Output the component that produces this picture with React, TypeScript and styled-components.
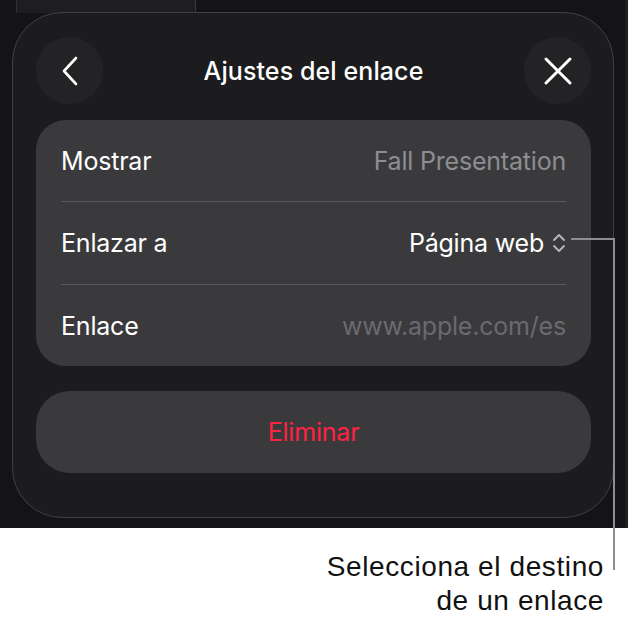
import React from "react";
import styled, { createGlobalStyle } from "styled-components";

const Global = createGlobalStyle`
  html, body { margin: 0; padding: 0; background: #ffffff; }
  body { font-family: Inter, "Noto Sans", sans-serif; -webkit-font-smoothing: antialiased; }
  * { box-sizing: border-box; }
`;

const Page = styled.div`
  position: relative;
  width: 628px;
  height: 620px;
  background: #ffffff;
`;

const Stage = styled.div`
  position: relative;
  height: 528px;
  background: #141416;
  padding: 12px 14px 10px 12px;
  border-right: 3px solid #1f1f21;
`;

const Backdrop = styled.div`
  position: absolute;
  top: 0;
  left: 16px;
  width: 180px;
  height: 13px;
  background: #1e1e20;
  border-left: 1px solid #303033;
  border-right: 1px solid #3a3a3d;
`;

const Sheet = styled.div`
  position: relative;
  width: 602px;
  height: 506px;
  background: #1c1c1e;
  border: 1px solid #404043;
  border-radius: 50px;
  padding: 24px 22px 44px 23px;
  display: flex;
  flex-direction: column;
`;

const Header = styled.div`
  display: grid;
  grid-template-columns: 67px 1fr 67px;
  align-items: center;
  height: 67px;
  margin-bottom: 16px;
`;

const RoundButton = styled.button`
  width: 67px;
  height: 67px;
  border-radius: 50%;
  border: none;
  background: #232325;
  display: flex;
  align-items: center;
  justify-content: center;
  padding: 0;
  color: #ffffff;
`;

const Title = styled.div`
  text-align: center;
  color: #ffffff;
  font-size: 25px;
  font-weight: 500;
  letter-spacing: 0.1px;
`;

const Card = styled.div`
  background: #3a3a3c;
  border-radius: 30px;
  padding: 0 25px;
  display: flex;
  flex-direction: column;
`;

const Row = styled.div<{ $first?: boolean; $h: number }>`
  height: ${(p) => p.$h}px;
  display: flex;
  align-items: center;
  justify-content: space-between;
  border-top: ${(p) => (p.$first ? "none" : "1px solid #58585c")};
`;

const Label = styled.span`
  color: #ffffff;
  font-size: 25px;
  letter-spacing: -0.2px;
`;

const Value = styled.span<{ $tone: "light" | "dim" | "white" }>`
  display: flex;
  align-items: center;
  gap: 8px;
  font-size: 25px;
  letter-spacing: -0.2px;
  color: ${(p) =>
    p.$tone === "white" ? "#ffffff" : p.$tone === "light" ? "#8d8d92" : "#6a6a6f"};
`;

const DeleteButton = styled.button`
  margin-top: 25px;
  height: 82px;
  width: 100%;
  border: none;
  border-radius: 34px;
  background: #3a3a3c;
  color: #ff2343;
  font-family: Inter, "Noto Sans", sans-serif;
  font-size: 25px;
  letter-spacing: -0.2px;
`;

const Leader = styled.div`
  position: absolute;
  left: 571px;
  top: 238px;
  width: 44px;
  height: 332px;
  border-top: 2px solid #8e8e90;
  border-right: 2px solid #8e8e90;
`;

const Callout = styled.div`
  margin-top: 22px;
  padding-right: 24px;
  text-align: right;
  font-family: "Liberation Sans", Arial, sans-serif;
  font-size: 28px;
  line-height: 34px;
  letter-spacing: 0.6px;
  color: #111111;
`;

const ChevronLeft = () => (
  <svg width="18" height="30" viewBox="0 0 18 30" fill="none">
    <path d="M15 2 L3 15 L15 28" stroke="#fff" strokeWidth="2.6" strokeLinecap="round" strokeLinejoin="round" />
  </svg>
);

const CloseIcon = () => (
  <svg width="30" height="30" viewBox="0 0 30 30" fill="none">
    <path d="M3 3 L27 27 M27 3 L3 27" stroke="#fff" strokeWidth="3" strokeLinecap="round" />
  </svg>
);

const UpDown = () => (
  <svg width="14" height="22" viewBox="0 0 14 22" fill="none">
    <path d="M2 8 L7 3 L12 8 M2 14 L7 19 L12 14" stroke="#b8b8bc" strokeWidth="1.8" strokeLinecap="round" strokeLinejoin="round" />
  </svg>
);

export default function App() {
  return (
    <Page>
      <Global />
      <Stage>
        <Backdrop />
        <Sheet>
          <Header>
            <RoundButton aria-label="Atrás">
              <ChevronLeft />
            </RoundButton>
            <Title>Ajustes del enlace</Title>
            <RoundButton aria-label="Cerrar">
              <CloseIcon />
            </RoundButton>
          </Header>
          <Card>
            <Row $first $h={81}>
              <Label>Mostrar</Label>
              <Value $tone="light">Fall Presentation</Value>
            </Row>
            <Row $h={83}>
              <Label>Enlazar a</Label>
              <Value $tone="white">
                Página web
                <UpDown />
              </Value>
            </Row>
            <Row $h={82}>
              <Label>Enlace</Label>
              <Value $tone="dim">www.apple.com/es</Value>
            </Row>
          </Card>
          <DeleteButton>Eliminar</DeleteButton>
        </Sheet>
      </Stage>
      <Leader />
      <Callout>
        Selecciona el destino
        <br />
        de un enlace
      </Callout>
    </Page>
  );
}
